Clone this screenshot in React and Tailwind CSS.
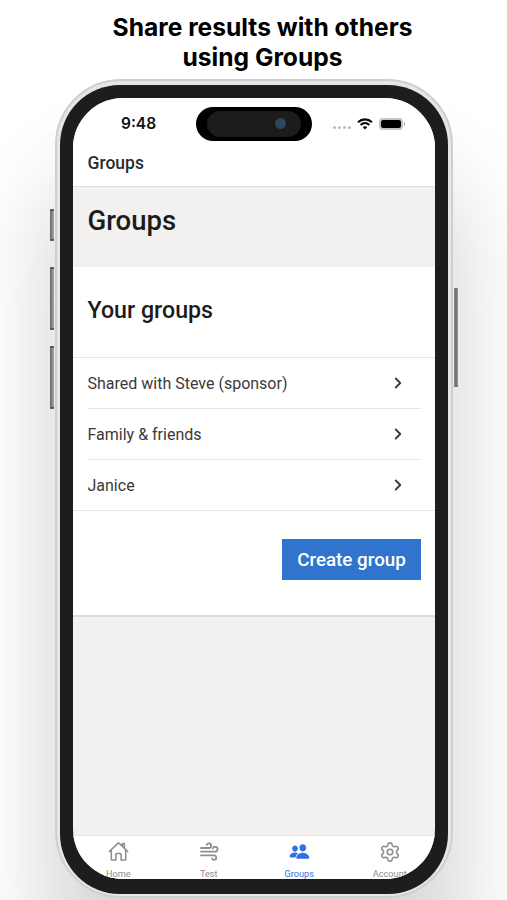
import React from 'react';
import { IoHomeOutline, IoPeople } from 'react-icons/io5';
import { ChevronRight, Settings } from 'lucide-react';

const groups = ['Shared with Steve (sponsor)', 'Family & friends', 'Janice'];

const HomeIcon = () => <IoHomeOutline size={21} className="[&_path]:[stroke-width:38]" />;

const WindIcon = () => (
  <svg
    width="21"
    height="21"
    viewBox="0 0 21 21"
    fill="none"
    stroke="currentColor"
    strokeWidth="1.8"
    strokeLinecap="round"
  >
    <path d="M3 7H10.800A2.300 2.300 0 1 0 8.700 3.800" />
    <path d="M3 10.600H17.100A2.400 2.400 0 1 0 14.900 7.300" />
    <path d="M3 14.400H16A2.200 2.200 0 1 1 14 17.500" />
  </svg>
);

const GroupsIcon = () => <IoPeople size={21} />;

const AccountIcon = () => <Settings size={22} strokeWidth={1.7} className="-mb-[1px]" />;

const tabs = [
  { label: 'Home', icon: HomeIcon },
  { label: 'Test', icon: WindIcon },
  { label: 'Groups', icon: GroupsIcon, active: true },
  { label: 'Account', icon: AccountIcon },
];

const StatusBar = () => (
  <div className="flex h-[50px] shrink-0 items-center pt-[1px]">
    <span className="w-[123px] pl-[48px] font-['Inter'] text-[15.5px] font-semibold leading-none text-[#111]">
      9:48
    </span>
    {/* Dynamic island */}
    <div className="flex h-[34px] w-[116px] items-center justify-center rounded-full bg-black">
      <div className="flex h-[26px] w-[94px] items-center justify-end rounded-full bg-[#1c1c1b] pr-[15px]">
        <div className="flex h-[11px] w-[11px] items-center justify-center rounded-full bg-[#3a4147]">
          <div className="h-[6px] w-[6px] rounded-full bg-[#1b4c7d]" />
        </div>
      </div>
    </div>
    <div className="flex gap-[2px] pl-[21px] pt-[7px]">
      {[0, 1, 2, 3].map((dot) => (
        <span key={dot} className="h-[3px] w-[3px] rounded-full bg-[#bdbdbd]" />
      ))}
    </div>
    <svg className="ml-[6px] h-[12px] w-[16px]" viewBox="0 0 16 12" fill="none" stroke="#080808">
      <path d="M1 4.200C5 .4 11 .4 15 4.200" strokeWidth="2.200" />
      <path d="M3.600 7C6.200 4.600 9.800 4.600 12.400 7" strokeWidth="2.200" />
      <path d="M5.800 9.200C7 8 9 8 10.200 9.200L8 11.500Z" fill="#080808" stroke="none" />
    </svg>
    <div className="ml-[6px] flex h-[12px] w-[24px] items-center rounded-[4px] border-2 border-[#c4c4c4]">
      <div className="h-full w-full rounded-[2px] bg-black" />
    </div>
    <div className="ml-[1px] h-[4px] w-[1px] bg-[#aaa]" />
  </div>
);

const GroupList = () => (
  <ul className="border-y border-[#e5e5e5] px-[14px]">
    {groups.map((name) => (
      <li
        key={name}
        className="flex h-[51px] items-center justify-between border-b border-[#e5e5e5] pr-[14px] text-[16px] text-[#3a3a3a] last:h-[50px] last:border-b-0"
      >
        <span className="pl-[0.5px] pt-[2px]">{name}</span>
        <ChevronRight size={18} strokeWidth={2.4} />
      </li>
    ))}
  </ul>
);

const TabBar = () => (
  <nav className="grid h-[44px] shrink-0 grid-cols-4 border-t border-[#e5e5e5] bg-white">
    {tabs.map(({ label, icon: Icon, active }) => (
      <div
        key={label}
        className={`flex flex-col items-center pt-[5px] ${active ? 'text-[#2f72e4]' : 'text-[#8e8e8e]'}`}
      >
        <Icon />
        <span className="mt-[6px] text-[9.2px] leading-[12px]">{label}</span>
      </div>
    ))}
  </nav>
);

const App = () => {
  return (
    <div className="h-[900px] w-[507px] overflow-hidden bg-white font-['Roboto',sans-serif]">
      <h1 className="h-[79px] pl-[18px] pt-[12px] text-center font-['Inter'] text-[24.6px] font-bold leading-[30px] text-black">
        Share results with others
        <br />
        using Groups
      </h1>

      <div className="flex">
        {/* Volume buttons */}
        <div className="z-10 flex w-[55px] shrink-0 flex-col items-end pr-[1px] pt-[130px]">
          <div className="h-[32px] w-[4px] rounded-[1px] border-y-2 border-[#555] bg-linear-to-r from-[#666] to-[#aaa]" />
          <div className="mt-[26px] h-[63px] w-[4px] rounded-[1px] border-y-2 border-[#555] bg-linear-to-r from-[#666] to-[#aaa]" />
          <div className="mt-[16px] h-[63px] w-[4px] rounded-[1px] border-y-2 border-[#555] bg-linear-to-r from-[#666] to-[#aaa]" />
        </div>

        <div className="h-[819px] w-[398px] shrink-0 rounded-[66px] border-2 border-[#cfcfd1] bg-[#e6e6e8] px-[3px] pb-[3px] pt-[4px] shadow-[0_100px_90px_10px_rgba(0,0,0,0.16)]">
          <div className="h-[809px] rounded-[60px] bg-[#1d1d1b] px-[13px] pt-[13px]">
            <div className="flex h-[781px] flex-col overflow-hidden rounded-[50px] bg-[#f2f1ef]">
              <header className="h-[89px] shrink-0 border-b border-[#dcdcdc] bg-white">
                <StatusBar />
                <p className="pl-[14.5px] pt-[2px] text-[17.5px] font-medium leading-[26px] text-[#2c2c2c]">Groups</p>
              </header>

              <h2 className="h-[80px] shrink-0 pl-[14.5px] pt-[17px] text-[27.5px] font-medium leading-[34px] text-[#1c1c1c]">
                Groups
              </h2>

              <section className="h-[350px] shrink-0 border-b-2 border-[#dcdcdc] bg-white">
                <h3 className="h-[90px] pl-[14.5px] pt-[27px] text-[23.2px] font-medium leading-[32px] text-[#1c1c1c]">
                  Your groups
                </h3>
                <GroupList />
                <div className="flex justify-end pr-[14px] pt-[28px]">
                  <button className="h-[41px] w-[139px] bg-[#3074ce] pt-[2px] text-[18.8px] font-medium text-white">
                    Create group
                  </button>
                </div>
              </section>

              <div className="grow" />
              <TabBar />
            </div>
          </div>
        </div>

        {/* Power button */}
        <div className="z-10 flex w-[54px] shrink-0 flex-col items-start pl-[1px] pt-[209px]">
          <div className="h-[99px] w-[4px] rounded-[1px] border-y-2 border-[#777] bg-linear-to-r from-[#999] via-[#666] to-[#aaa]" />
        </div>
      </div>
    </div>
  );
};

export default App;
